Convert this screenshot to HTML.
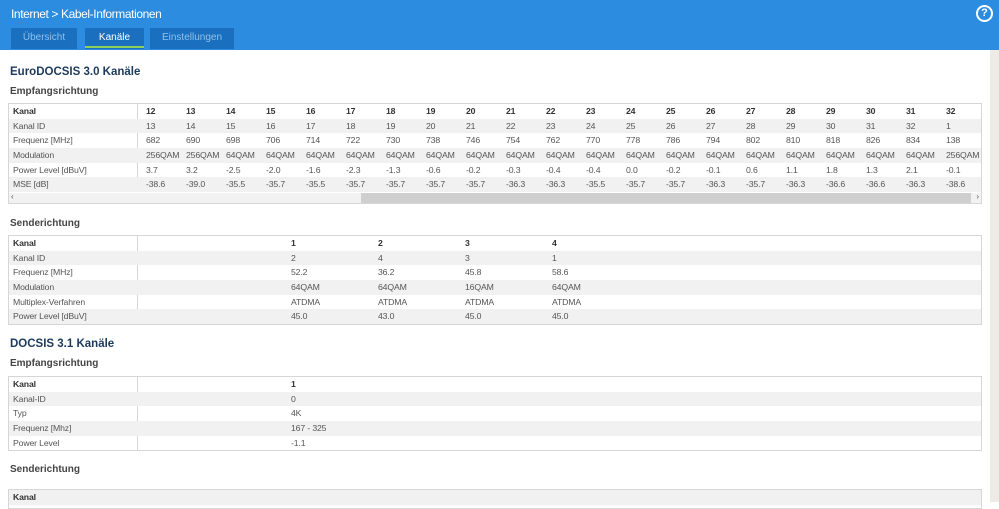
<!DOCTYPE html>
<html><head><meta charset="utf-8"><style>
*{margin:0;padding:0;box-sizing:border-box}
body{width:999px;height:502px;overflow:hidden;background:#fff;font-family:"Liberation Sans",sans-serif;color:#333;position:relative}
.hdr{position:absolute;left:0;top:0;width:999px;height:50px;background:#2b8ce0}
.title{position:absolute;left:11px;top:7px;color:#fff;font-size:12px;letter-spacing:-0.4px}
.help{position:absolute;left:976px;top:5px;width:17px;height:17px;border:2px solid #fff;border-radius:50%;color:#fff;font-size:11px;font-weight:bold;text-align:center;line-height:13px}
.tab{position:absolute;top:28px;height:21px;background:#1a6fbf;color:#8fc0ea;font-size:10px;text-align:center;line-height:20px}
.tab.act{color:#fff;background:#1a6fbf}
.tab.act:after{content:"";position:absolute;left:0;right:0;bottom:1px;height:2px;background:#8dcf5a}
.sb{position:absolute;left:990px;top:50px;width:9px;height:452px;background:#eeebe6}
h2{position:absolute;left:10px;font-size:11.5px;font-weight:bold;color:#1c3a5c}
h3{position:absolute;left:10px;font-size:10px;font-weight:bold;color:#444}
.t{position:absolute;left:8px;width:974px;border:1px solid #d6d6d6;font-size:8.7px;color:#555;letter-spacing:-0.15px}
.r{height:14.7px;line-height:14.7px;position:relative;white-space:nowrap}
.r:nth-child(odd){background:#f1f1f1}
.r span{position:absolute;top:0}
.r span.l{left:4px}
.b{font-weight:bold;color:#333}
.vl{position:absolute;left:128px;top:0;bottom:0;width:1px;background:#d6d6d6}
</style></head><body>
<div class="hdr"><div class="title">Internet &gt; Kabel-Informationen</div><div class="help">?</div>
<div class="tab" style="left:11px;width:66px">Übersicht</div>
<div class="tab act" style="left:85px;width:59px">Kanäle</div>
<div class="tab" style="left:150px;width:84px">Einstellungen</div></div>
<div class="sb"></div>
<h2 style="top:66px">EuroDOCSIS 3.0 Kanäle</h2>
<h3 style="top:86px">Empfangsrichtung</h3>
<div class="t" style="top:103px;height:101px" id="t1"><div class="vl" style="bottom:12px"></div></div>
<div style="position:absolute;left:9px;top:193px;width:972px;height:10px;background:#f2f2f2;font-size:8px;color:#555"><span style="position:absolute;left:2px;top:-1px">‹</span><div style="position:absolute;left:352px;width:610px;height:10px;background:#cfcfcf"></div><span style="position:absolute;right:2px;top:-1px">›</span></div>
<h3 style="top:218px">Senderichtung</h3>
<div class="t" style="top:235px;height:90px" id="t2"><div class="vl"></div></div>
<h2 style="top:338px">DOCSIS 3.1 Kanäle</h2>
<h3 style="top:358px">Empfangsrichtung</h3>
<div class="t" style="top:376px;height:75px" id="t3"><div class="vl"></div></div>
<h3 style="top:464px">Senderichtung</h3>
<div class="t" style="top:489px;height:20px"><div class="r"><span class="l b">Kanal</span></div></div>
<script>
function fill(id,rows,x0,dx){var t=document.getElementById(id);rows.forEach(function(r,i){var d=document.createElement('div');d.className='r';var h='<span class="l'+(i==0?' b':'')+'">'+r[0]+'</span>';for(var j=1;j<r.length;j++)h+='<span class="'+(i==0?'b':'')+'" style="left:'+(x0+(j-1)*dx)+'px">'+r[j]+'</span>';d.innerHTML=h;t.appendChild(d);});}
var k=[],ki=[];for(var i=12;i<=32;i++){k.push(i);ki.push(i==32?1:i+1);}
fill('t1',[["Kanal"].concat(k),["Kanal ID"].concat(ki),
["Frequenz [MHz]",682,690,698,706,714,722,730,738,746,754,762,770,778,786,794,802,810,818,826,834,138],
["Modulation","256QAM","256QAM"].concat(Array(18).fill("64QAM")).concat(["256QAM"]),
["Power Level [dBuV]","3.7","3.2","-2.5","-2.0","-1.6","-2.3","-1.3","-0.6","-0.2","-0.3","-0.4","-0.4","0.0","-0.2","-0.1","0.6","1.1","1.8","1.3","2.1","-0.1"],
["MSE [dB]","-38.6","-39.0","-35.5","-35.7","-35.5","-35.7","-35.7","-35.7","-35.7","-36.3","-36.3","-35.5","-35.7","-35.7","-36.3","-35.7","-36.3","-36.6","-36.6","-36.3","-38.6"]],137,40);
fill('t2',[["Kanal",1,2,3,4],["Kanal ID",2,4,3,1],["Frequenz [MHz]","52.2","36.2","45.8","58.6"],["Modulation","64QAM","64QAM","16QAM","64QAM"],["Multiplex-Verfahren","ATDMA","ATDMA","ATDMA","ATDMA"],["Power Level [dBuV]","45.0","43.0","45.0","45.0"]],282,87);
fill('t3',[["Kanal",1],["Kanal-ID",0],["Typ","4K"],["Frequenz [Mhz]","167 - 325"],["Power Level","-1.1"]],282,87);
</script>
</body></html>
